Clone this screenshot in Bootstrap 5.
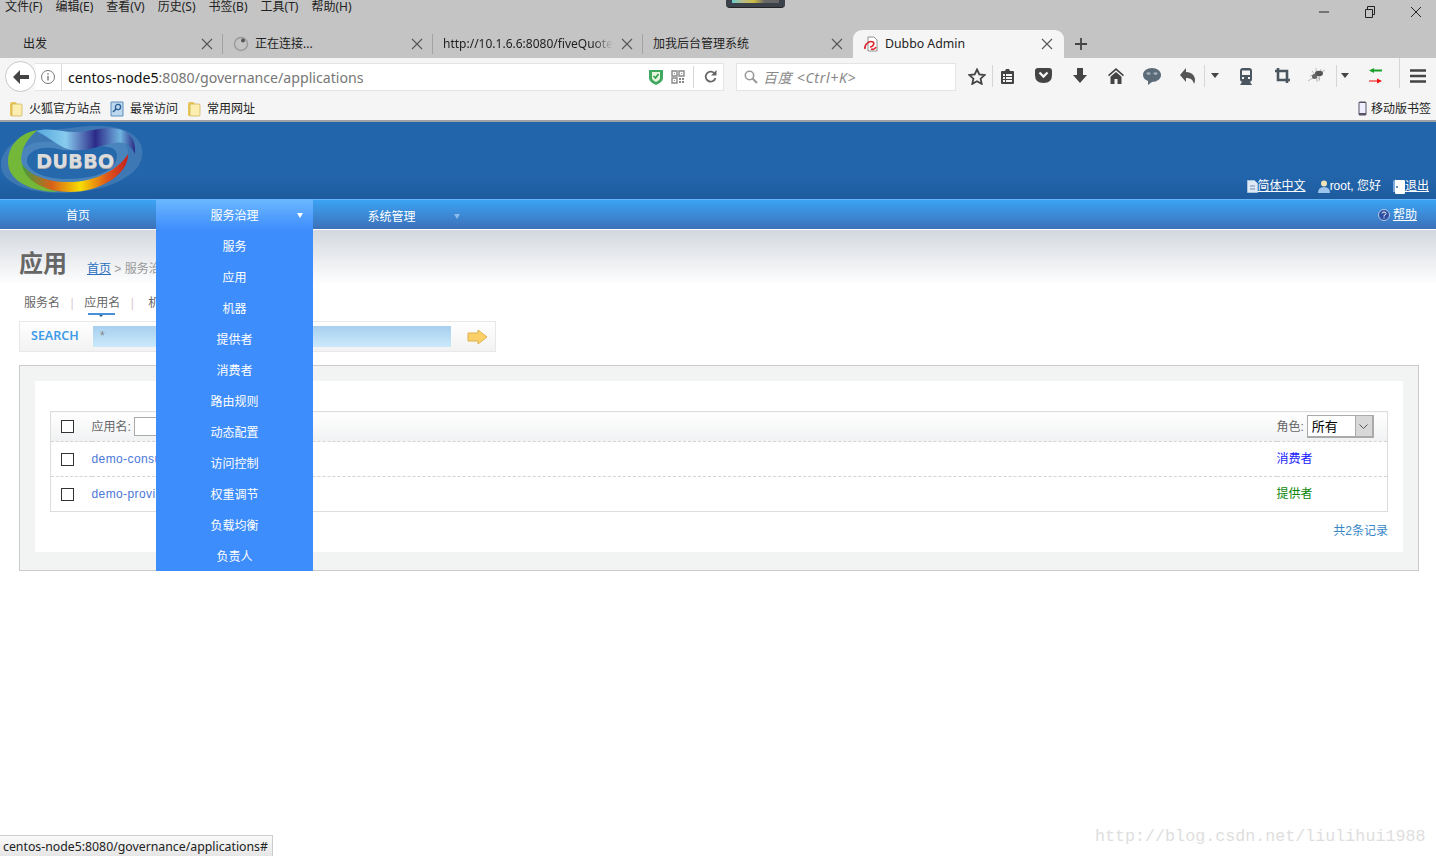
<!DOCTYPE html>
<html>
<head>
    <title>Dubbo Admin</title>
    <link href="https://cdn.jsdelivr.net/npm/bootstrap@5.3.3/dist/css/bootstrap.min.css" rel="stylesheet" />
    <script src="https://cdn.jsdelivr.net/npm/bootstrap@5.3.3/dist/js/bootstrap.bundle.min.js"></script>
    <style>
        html,body{height:856px;overflow:hidden;background:#fff}
        body{font-family:"Liberation Sans","Noto Sans CJK SC",sans-serif;font-size:12px;color:#666;position:relative}
        a{color:inherit}
        .ff-chrome{font-family:"Noto Sans","Noto Sans CJK SC",sans-serif;color:#222}

        /* browser chrome */
        .menu-row{height:30px;background:#c4c4c4;font-size:12px;line-height:14px}
        .menu-row .menu-items{gap:13px;padding-left:5px}
        .win-ctl{gap:34px;padding:4px 14px 0 0;height:20px}
        .gadget{position:absolute;left:726px;top:-4px;width:59px;height:12px;background:#3b414a;border-radius:4px;border-bottom:1px solid #222}
        .gadget i{display:block;margin:4px 6px 0;height:3px;background:linear-gradient(90deg,#6cc,#bb8,#cb4,#666 70%)}
        .tab-row{height:28px;background:#c4c4c4}
        .ff-tab{width:210px;height:28px;flex:none;padding:0 10px 0 23px;font-size:12px;position:relative}
        .ff-tab .tab-title{flex:1;white-space:nowrap;overflow:hidden}
        .ff-tab.sep::after{content:"";position:absolute;right:0;top:4px;bottom:4px;width:1px;background:#a2a2a2}
        .ff-tab.p10{padding-left:10px}
        .ff-tab.active{background:#f5f5f5;border-radius:9px 9px 0 0;font-size:12.300px;width:211px;padding-right:11px}
        .tab-ic{margin-right:6px;flex:none}
        .tab-plus{margin-left:11px}
        .fade-end{-webkit-mask-image:linear-gradient(90deg,#000 88%,transparent);mask-image:linear-gradient(90deg,#000 88%,transparent)}
        .tool-row{height:37px;background:#f5f5f5;padding-left:5px}
        .back-btn{width:31px;height:31px;border-radius:50%;background:#fff;border:1px solid #c8c8c8;flex:none;z-index:1}
        .url-box{width:689px;height:28px;margin-left:-1px;background:#fff;border:1px solid #e4e4e4;border-left:0;padding-left:5px;font-size:14.150px}
        .url-text{border-left:1px solid #dcdcdc;padding:1px 0 0 6px;margin-left:5px;flex:1;line-height:25px;color:#777;white-space:nowrap}
        .url-text b{font-weight:400;color:#111}
        .v-sep{width:1px;height:22px;background:#d6d6d6;flex:none}
        .reload-ic{margin:0 6px 0 10px}
        .find-box{width:220px;height:28px;margin-left:12px;background:#fff;border:1px solid #e4e4e4;padding-left:7px;font-size:14px;letter-spacing:.7px;font-style:italic;color:#888;gap:5px}
        .find-box span{padding-top:1px}
        .tool-icons{position:relative;flex:1;height:37px}
        .tool-icons>*{position:absolute;top:10px}
        .book-row{height:25px;background:#f5f5f5;font-size:12px;padding:2px 5px 0 9px}
        .book-row .bm{gap:6px;margin-right:9px}
        .chrome-line{height:2px;background:#9ea3a8}

        /* dubbo header */
        .db-head{height:77px;background:linear-gradient(#2265ab 70%,#1e5b9e);color:#fff;padding:0 7px 0 0;position:relative}
        .db-logo{position:absolute;left:0;top:2px}
        .db-logo-text{position:absolute;left:36px;top:26px;font-family:"DejaVu Sans",sans-serif;font-weight:700;font-size:19.500px;line-height:24px;color:#dcdcdc;text-shadow:0 1px 0 #aaa}
        .head-links{height:77px;gap:12px;padding-bottom:4px}
        .head-links a,.nav-help a{color:#fff}
        .db-nav{height:31px;background:linear-gradient(#3ba3f4,#3d70b8);border-top:1px solid #62b5f8;color:#fff;position:relative;border-bottom:1px solid #fff}
        .db-nav-item{width:157px;flex:none;position:relative;text-align:center;line-height:33px}
        .db-nav-item.sys{line-height:35px}
        .db-nav-item .tri{position:absolute;left:141px;top:14px;border:3.500px solid transparent;border-top:5px solid #fff;border-bottom:0}
        .db-nav-item .tri.dim{border-top-color:#8bbbe8}
        .db-nav-item.on{background:linear-gradient(#6bb8ff,#3e8dfc);height:31px;margin-top:-1px;line-height:35px}
        .db-nav-first{width:156px}
        .db-menu{position:absolute;left:156px;top:30px;width:157px;background:#3e8dfc;z-index:5;text-align:center}
        .db-menu a{display:block;height:31px;line-height:35px;color:#fff;text-decoration:none}
        .nav-help{padding:1px 19px 0 0;gap:3px}

        /* page */
        .page-wrap{height:55px;background:linear-gradient(#d3d8de,#fff);padding:18px 0 0 19px}
        .page-title{font-size:24px;font-weight:700;color:#666;line-height:30px;margin:1px 0 0;width:68px}
        .crumb{padding-top:12px;color:#999}
        .crumb a{color:#2b70c0}
        .sub-tabs{padding:10px 0 0 24px;height:36px;font-size:12px;color:#666;gap:10.500px;line-height:17px}
        .sub-tabs .pipe{color:#d8c8d4}
        .sub-tabs .cur{position:relative}
        .sub-tabs .cur::after{content:"";position:absolute;left:4px;right:5px;bottom:-3px;height:2px;background:#4a90d8}
        .sub-tabs .cur::before{content:"";position:absolute;left:15px;bottom:-5px;border:2px solid transparent;border-top-color:#2b5e96;border-bottom:0}
        .search-bar{width:477px;height:31px;margin-left:19px;border:1px solid #e8e8e8;background:linear-gradient(#fff,#f2f2f2);padding-left:11px}
        .search-label{color:#3d9be9;font-family:"Noto Sans",sans-serif;font-weight:600;font-size:12.500px;width:62px}
        .search-in{width:358px;height:21px;background:linear-gradient(#a8cfee,#cbe9fc);border:0;padding:0 7px;color:#888;font-size:12px;line-height:21px}
        .panel-out{margin:13px 17px 0 19px;height:206px;border:1px solid #ccc;background:#f2f4f4;padding:15px}
        .panel-in{background:#fff;height:171px;padding:30px 15px 0}
        .app-tbl{border:1px solid #ddd;margin:0;width:100%;font-size:12px;color:#666;table-layout:fixed}
        .app-tbl td{border:0;padding:0;vertical-align:middle;box-shadow:none}
        .app-tbl tr{height:35px}
        .app-tbl tr.hd{height:30px}
        .app-tbl tr.hd td{background:linear-gradient(#fff,#f0f1f2)}
        .app-tbl tr+tr td{border-top:1px dashed #d4d4d4}
        .col-ck{width:41px;padding-left:10px!important}
        .col-role{width:111px}
        .hd-lbl{vertical-align:-1px}
        .box-ck{display:block;width:13px;height:13px;border:1px solid #333;background:#fff}
        .name-in{width:60px;height:19px;border:1px solid #aaa;margin-left:3px;vertical-align:middle}
        .app-link{color:#4a78d8;text-decoration:none;letter-spacing:.4px}
        .role-sel{display:inline-flex;width:67px;height:23px;border:1px solid #aaa;border-right-width:2px;border-bottom-width:2px;margin-left:3px;vertical-align:middle;background:#fff;color:#000;font-size:13px;line-height:21px;padding-left:4px;justify-content:space-between}
        .role-sel span{width:17px;background:#d8d8d8;border-left:1px solid #aaa;text-align:center;display:flex;align-items:center;justify-content:center}
        .role-c{color:#1a1aff}
        .role-p{color:#0a860a}
        .pager{color:#3a87c8;text-align:right;padding-top:11px;line-height:16px}

        .status-tip{position:absolute;left:0;bottom:0;height:21px;width:273px;border:1px solid #ccc;border-left:0;border-bottom:0;background:linear-gradient(#fafafa,#e6e6e6);font-size:12.300px;line-height:20px;padding:1px 0 0 3px;color:#222;font-family:"Noto Sans",sans-serif;white-space:nowrap;overflow:hidden}
        .wmark{position:absolute;left:1095px;top:827px;font-family:"Liberation Mono",monospace;font-size:16.700px;color:#dedede;line-height:20px;white-space:nowrap}
    </style>
</head>
<body>
    <svg width="0" height="0" class="position-absolute">
        <symbol id="x" viewBox="0 0 12 12"><path d="M1 1l10 10M11 1L1 11" stroke="#555" stroke-width="1.100" fill="none"/></symbol>
        <symbol id="folder" viewBox="0 0 14 16"><path d="M1 3q0-2 2-2h3q1 0 2 2v12H2q-1 0-1-1z" fill="#e9c65b"/><path d="M3 3h9q1 0 1 1v10q0 1-1 1H3z" fill="#fbeeb0" stroke="#cfae4c" stroke-width=".7"/></symbol>
        <symbol id="caret" viewBox="0 0 8 5"><path d="M0 0h8L4 5z" fill="#444"/></symbol>
    </svg>

    <!-- browser -->
    <div class="ff-chrome">
        <div class="gadget"><i></i></div>
        <div class="menu-row d-flex justify-content-between">
            <div class="menu-items d-flex">
                <span>文件(F)</span><span>编辑(E)</span><span>查看(V)</span><span>历史(S)</span><span>书签(B)</span><span>工具(T)</span><span>帮助(H)</span>
            </div>
            <div class="win-ctl d-flex align-items-center">
                <svg width="12" height="12" viewBox="0 0 12 12"><path d="M1 6h10" stroke="#222"/></svg>
                <svg width="12" height="12" viewBox="0 0 12 12"><path d="M1.500 3.500h7v8h-7zM3.500 3.500v-3h7v8h-2" stroke="#222" fill="none"/></svg>
                <svg width="12" height="12" viewBox="0 0 12 12"><path d="M1 1l10 10M11 1L1 11" stroke="#222" fill="none"/></svg>
            </div>
        </div>

        <div class="tab-row d-flex">
            <div class="ff-tab sep d-flex align-items-center" style="width:223px"><span class="tab-title">出发</span><svg width="12" height="12"><use href="#x"/></svg></div>
            <div class="ff-tab sep p10 d-flex align-items-center">
                <svg width="16" height="16" viewBox="0 0 16 16" class="tab-ic"><circle cx="8" cy="8" r="6.500" fill="none" stroke="#999" stroke-width="1.400"/><circle cx="10" cy="4.500" r="2" fill="#555"/></svg>
                <span class="tab-title">正在连接...</span><svg width="12" height="12"><use href="#x"/></svg></div>
            <div class="ff-tab sep p10 d-flex align-items-center"><span class="tab-title fade-end me-2">http://10.1.6.6:8080/fiveQuote</span><svg width="12" height="12"><use href="#x"/></svg></div>
            <div class="ff-tab p10 d-flex align-items-center"><span class="tab-title">加我后台管理系统</span><svg width="12" height="12"><use href="#x"/></svg></div>
            <div class="ff-tab active p10 d-flex align-items-center">
                <svg width="16" height="16" viewBox="0 0 16 16" class="tab-ic"><path d="M5 1h6l3 3v11H5z" fill="#fff" stroke="#777" stroke-width=".8"/><path d="M2 13C1 9 6 4 10 6c2 1 0 5-3 5M8 13c2 1 4 0 5-2" fill="none" stroke="#d8232a" stroke-width="1.600"/></svg>
                <span class="tab-title">Dubbo Admin</span><svg width="12" height="12"><use href="#x"/></svg></div>
            <svg width="12" height="12" viewBox="0 0 12 12" class="align-self-center tab-plus"><path d="M6 0v12M0 6h12" stroke="#444" stroke-width="1.800"/></svg>
        </div>

        <div class="tool-row d-flex align-items-center">
            <div class="back-btn d-flex align-items-center justify-content-center">
                <svg width="16" height="14" viewBox="0 0 16 14"><path d="M7 0L0 7l7 7V9h9V5H7z" fill="#444"/></svg>
            </div>
            <div class="url-box d-flex align-items-center">
                <svg width="16" height="16" viewBox="0 0 16 16" class="flex-none"><circle cx="8" cy="8" r="6.500" fill="none" stroke="#777"/><path d="M8 7v4.500M8 4.200v1.600" stroke="#777" stroke-width="1.400"/></svg>
                <div class="url-text"><b>centos-node5</b>:8080/governance/applications</div>
                <svg width="14" height="16" viewBox="0 0 14 16" class="me-2 flex-none"><path d="M0 1h14v8q0 4-7 7Q0 13 0 9z" fill="#41a85f"/><path d="M3 3h8v6q0 2-4 4-4-2-4-4z" fill="#e6f6dc"/><path d="M4.500 7l2 2 3-4" stroke="#2f9c4c" stroke-width="1.600" fill="none"/></svg>
                <svg width="14" height="14" viewBox="0 0 14 14" class="flex-none"><path d="M1 1h5v5H1zM8 1h5v5H8zM1 8h5v5H1z" fill="none" stroke="#888" stroke-width="1.400"/><path d="M8 8h2v2H8zM11 8h2v2h-2zM8 11h2v2H8zM11 11h2v2h-2zM3 3h1v1H3zM10 3h1v1h-1zM3 10h1v1H3z" fill="#888"/></svg>
                <div class="v-sep ms-2"></div>
                <svg width="13" height="13" viewBox="0 0 13 13" class="reload-ic flex-none"><path d="M11 4a5 5 0 1 0 .5 4" fill="none" stroke="#666" stroke-width="1.800"/><path d="M12.500 0v5.500H7z" fill="#666"/></svg>
            </div>
            <div class="find-box d-flex align-items-center">
                <svg width="14" height="14" viewBox="0 0 14 14"><circle cx="5.500" cy="5.500" r="4.200" fill="none" stroke="#999" stroke-width="1.600"/><path d="M8.500 8.500l4.500 4.500" stroke="#999" stroke-width="2"/></svg>
                <span>百度 &lt;Ctrl+K&gt;</span>
            </div>
            <div class="tool-icons">
                <svg style="left:12px" width="18" height="17" viewBox="0 0 18 17"><path d="M9 1.500l2.300 5 5.200.6-3.900 3.600 1.100 5.200L9 13.300l-4.700 2.600 1.100-5.200L1.500 7.100l5.200-.6z" fill="none" stroke="#444" stroke-width="1.800"/></svg>
                <div class="v-sep" style="left:36px;top:7px"></div>
                <svg style="left:44px" width="15" height="16" viewBox="0 0 15 16"><path d="M1 4q0-1 1-1h3l1-2h3l1 2h3q1 0 1 1v11q0 1-1 1H2q-1 0-1-1z" fill="#444"/><path d="M3 6h2v2H3zM6 6h6v2H6zM3 9h2v2H3zM6 9h6v2H6zM3 12h2v2H3zM6 12h6v2H6z" fill="#f5f5f5"/></svg>
                <svg style="left:79px" width="17" height="15" viewBox="0 0 17 15"><path d="M0 3q0-3 3-3h11q3 0 3 3v4q0 8-8.500 8T0 7z" fill="#444"/><path d="M4.500 4.500l4 4 4-4" fill="none" stroke="#f5f5f5" stroke-width="2.400"/></svg>
                <svg style="left:117px" width="14" height="15" viewBox="0 0 14 15"><path d="M4 0h6v7h4l-7 8-7-8h4z" fill="#444"/></svg>
                <svg style="left:152px" width="16" height="16" viewBox="0 0 16 16"><path d="M8 0L0 7l1 1.200 7-6 7 6L16 7z" fill="#444"/><path d="M8 4L2.500 8.800V16h4v-5h3v5h4V8.800z" fill="#444"/></svg>
                <svg style="left:187px" width="18" height="17" viewBox="0 0 18 17"><path d="M9 0c5 0 9 3 9 7s-4 7-9 7l-4 3v-4C2 12 0 10 0 7c0-4 4-7 9-7z" fill="#5c6b78"/><ellipse cx="5.500" cy="5.500" rx="2" ry="1.300" fill="#a7b2bb"/><ellipse cx="12.500" cy="5.500" rx="2" ry="1.300" fill="#a7b2bb"/></svg>
                <svg style="left:224px" width="15" height="16" viewBox="0 0 15 16"><path d="M6 0v4c6 0 9 4 9 8 0 2-1 4-1 4-1-4-3-6-8-6v4L0 7z" fill="#555"/></svg>
                <div class="v-sep" style="left:248px;top:7px"></div>
                <svg style="left:255px;top:15px" width="8" height="5"><use href="#caret"/></svg>
                <svg style="left:283px" width="14" height="17" viewBox="0 0 14 17"><path d="M4 0h6a3 3 0 0 1 3 3v8a3 3 0 0 1-3 3H4a3 3 0 0 1-3-3V3a3 3 0 0 1 3-3z" fill="#4a5560"/><path d="M3 2.500h8V7H3zM3 9h2v2H3zM9 9h2v2H9z" fill="#f5f5f5"/><path d="M3 14l-2 3h12l-2-3z" fill="#4a5560"/></svg>
                <svg style="left:319px" width="15" height="15" viewBox="0 0 15 15"><path d="M3 0v12h12M0 3h12v12" fill="none" stroke="#4a5560" stroke-width="2.600"/></svg>
                <svg style="left:351px;top:9px" width="20" height="17" viewBox="0 0 20 17"><path d="M1 14L18 3M5 4l8 9M3 9l13-4M9 1l1 14M14 2l-2 12" stroke="#aaa" stroke-width=".8"/><ellipse cx="12" cy="6.500" rx="4" ry="2.800" fill="#555"/><circle cx="7.500" cy="9.500" r="2.500" fill="#666"/></svg>
                <div class="v-sep" style="left:380px;top:7px"></div>
                <svg style="left:385px;top:15px" width="8" height="5"><use href="#caret"/></svg>
                <svg style="left:413px" width="13" height="16" viewBox="0 0 13 16"><path d="M0 2.500L5 0v1.500h8v2H5V5z" fill="#18a02c"/><path d="M0 12h8v2H0z" fill="#f47c7c"/><path d="M8 10.500l5 2.500-5 2.500z" fill="#ee1111"/></svg>
                <div class="v-sep" style="left:443px;top:0;height:30px"></div>
                <svg style="left:454px;top:11px" width="16" height="14" viewBox="0 0 16 14"><path d="M0 1.500h16M0 7h16M0 12.500h16" stroke="#444" stroke-width="2.600"/></svg>
            </div>
        </div>

        <div class="book-row d-flex align-items-center">
            <div class="bm d-flex align-items-center"><svg width="14" height="16"><use href="#folder"/></svg><span>火狐官方站点</span></div>
            <div class="bm d-flex align-items-center"><svg width="14" height="16" viewBox="0 0 14 16"><path d="M1 1h12v14H1z" fill="#bcd7ee" stroke="#5d8fbf"/><circle cx="8" cy="6" r="2.600" fill="none" stroke="#2d5f96" stroke-width="1.300"/><path d="M6 8l-3 3" stroke="#2d5f96" stroke-width="1.600"/></svg><span>最常访问</span></div>
            <div class="bm d-flex align-items-center"><svg width="14" height="16"><use href="#folder"/></svg><span>常用网址</span></div>
            <div class="ms-auto d-flex align-items-center gap-1"><svg width="9" height="15" viewBox="0 0 9 15"><rect x=".5" y=".5" width="8" height="14" rx="1.500" fill="#556" /><rect x="1.500" y="2" width="6" height="10" fill="#eef"/></svg><span>移动版书签</span></div>
        </div>
        <div class="chrome-line"></div>
    </div>

    <!-- dubbo admin page -->
    <div class="db-head">
        <div class="db-logo">
            <svg width="146" height="74" viewBox="0 0 146 74">
                <defs>
                    <linearGradient id="gBot" x1="0" x2="1" y1="0" y2="0"><stop offset="0" stop-color="#3f9d3e"/><stop offset=".28" stop-color="#d8601a"/><stop offset=".55" stop-color="#f7dd00"/><stop offset=".8" stop-color="#e0581a"/><stop offset="1" stop-color="#c2201e"/></linearGradient>
                    <linearGradient id="gTop" x1="0" x2="1" y1="0" y2="0"><stop offset="0" stop-color="#55a8dc"/><stop offset=".3" stop-color="#88cbee"/><stop offset=".6" stop-color="#2c2a88"/><stop offset=".85" stop-color="#6fb4e0"/><stop offset="1" stop-color="#2a2c86"/></linearGradient>
                </defs>
                <path d="M1 40C2 22 24 8 50 6c22-1 36-6 62-3 22 3 33 16 30 30-4 22-42 36-82 36C26 69 0 58 1 40z" fill="#4a80b8" opacity=".7"/>
                <path d="M20 30c6-12 22-14 38-11 22 5 44-9 63-2 9 4 9 17 2 27-9 11-32 18-56 18C38 62 14 50 20 30z" fill="#4a84bc"/>
                <path d="M28 32c5-8 18-10 30-7 20 5 38-7 54-1 7 3 6 12 1 18-8 9-26 13-47 13-24 0-44-10-38-23z" fill="#2668ac"/>
                <path d="M8 38C8 20 22 8 38 6 27 14 19 28 22 40c3 12 16 22 36 28C30 68 8 56 8 38z" fill="#74b83a"/>
                <path d="M22 40c8 12 28 19 50 18 24-1 46-12 56-28 1 20-28 38-58 38-26 0-46-12-48-28z" fill="url(#gBot)"/>
                <path d="M36 7c14-4 26 1 38 1 16 0 32-7 48-2 10 4 14 12 13 24-4-8-10-13-20-11-14 2-28 9-44 7C60 24 48 12 36 7z" fill="url(#gTop)"/>
            </svg>
            <span class="db-logo-text">DUBBO</span>
        </div>
        <div class="head-links d-flex justify-content-end align-items-end">
            <span class="d-flex align-items-center"><svg width="11" height="13" viewBox="0 0 11 13"><path d="M.5.500h7l3 3v9H.500z" fill="#dfe9f5" stroke="#a9c3de"/><path d="M3 6h5M3 9h5" stroke="#6f8fb0"/></svg><a href="#">简体中文</a></span>
            <span class="d-flex align-items-center"><svg width="12" height="13" viewBox="0 0 12 13"><circle cx="6" cy="3.500" r="3" fill="#f3e2b4"/><path d="M0 13q0-6 6-6t6 6z" fill="#9cc3ea"/></svg>root, 您好</span>
            <span class="d-flex align-items-center"><svg width="12" height="15" viewBox="0 0 12 15"><path d="M0 2l3-2v13H0z" fill="#7faade"/><rect x="2" y="1" width="10" height="14" rx="1" fill="#fff"/><circle cx="4" cy="8" r=".9" fill="#2265ab"/></svg><a href="#">退出</a></span>
        </div>
    </div>

    <div class="db-nav d-flex">
        <div class="db-nav-item db-nav-first">首页</div>
        <div class="db-nav-item on">服务治理<span class="tri"></span></div>
        <div class="db-nav-item sys">系统管理<span class="tri dim"></span></div>
        <div class="nav-help ms-auto d-flex align-items-center">
            <svg width="12" height="12" viewBox="0 0 12 12"><circle cx="6" cy="6" r="5.500" fill="#2c4ea0" stroke="#b9c9e6"/><path d="M4 4.500Q4 3 6 3t2 1.500Q8 5.500 6 6.500V7.500M6 8.500v1" fill="none" stroke="#fff"/></svg>
            <a href="#">帮助</a>
        </div>
        <div class="db-menu">
            <a href="#">服务</a><a href="#">应用</a><a href="#">机器</a><a href="#">提供者</a><a href="#">消费者</a><a href="#">路由规则</a><a href="#">动态配置</a><a href="#">访问控制</a><a href="#">权重调节</a><a href="#">负载均衡</a><a href="#">负责人</a>
        </div>
    </div>

    <div class="page-wrap d-flex">
        <h1 class="page-title">应用</h1>
        <div class="crumb"><a href="#">首页</a> &gt; 服务治理 &gt; 应用</div>
    </div>
    <div class="sub-tabs d-flex align-items-start">
        <span>服务名</span><span class="pipe">|</span><span class="cur">应用名</span><span class="pipe">|</span><span class="ms-1">机器名</span>
    </div>
    <div class="search-bar d-flex align-items-center">
        <span class="search-label">SEARCH</span>
        <div class="search-in">*</div>
        <svg width="21" height="16" viewBox="0 0 21 16" class="ms-3"><path d="M1 4h10V1l9 7-9 7v-3H1z" fill="#fbd069" stroke="#e0b04a"/></svg>
    </div>

    <div class="panel-out">
        <div class="panel-in">
            <table class="table app-tbl">
                <tr class="hd">
                    <td class="col-ck"><span class="box-ck"></span></td>
                    <td><span class="hd-lbl">应用名:</span><input class="name-in" type="text" /></td>
                    <td class="col-role"><span class="hd-lbl">角色:</span><span class="role-sel">所有<span><svg width="9" height="5" viewBox="0 0 9 5"><path d="M.5.500l4 4 4-4" stroke="#555" fill="none"/></svg></span></span></td>
                </tr>
                <tr>
                    <td class="col-ck"><span class="box-ck"></span></td>
                    <td><a class="app-link" href="#">demo-consumer</a></td>
                    <td class="role-c">消费者</td>
                </tr>
                <tr>
                    <td class="col-ck"><span class="box-ck"></span></td>
                    <td><a class="app-link" href="#">demo-provider</a></td>
                    <td class="role-p">提供者</td>
                </tr>
            </table>
            <div class="pager">共2条记录</div>
        </div>
    </div>

    <div class="wmark">http://blog.csdn.net/liulihui1988</div>
    <div class="status-tip">centos-node5:8080/governance/applications#</div>
</body>
</html>
